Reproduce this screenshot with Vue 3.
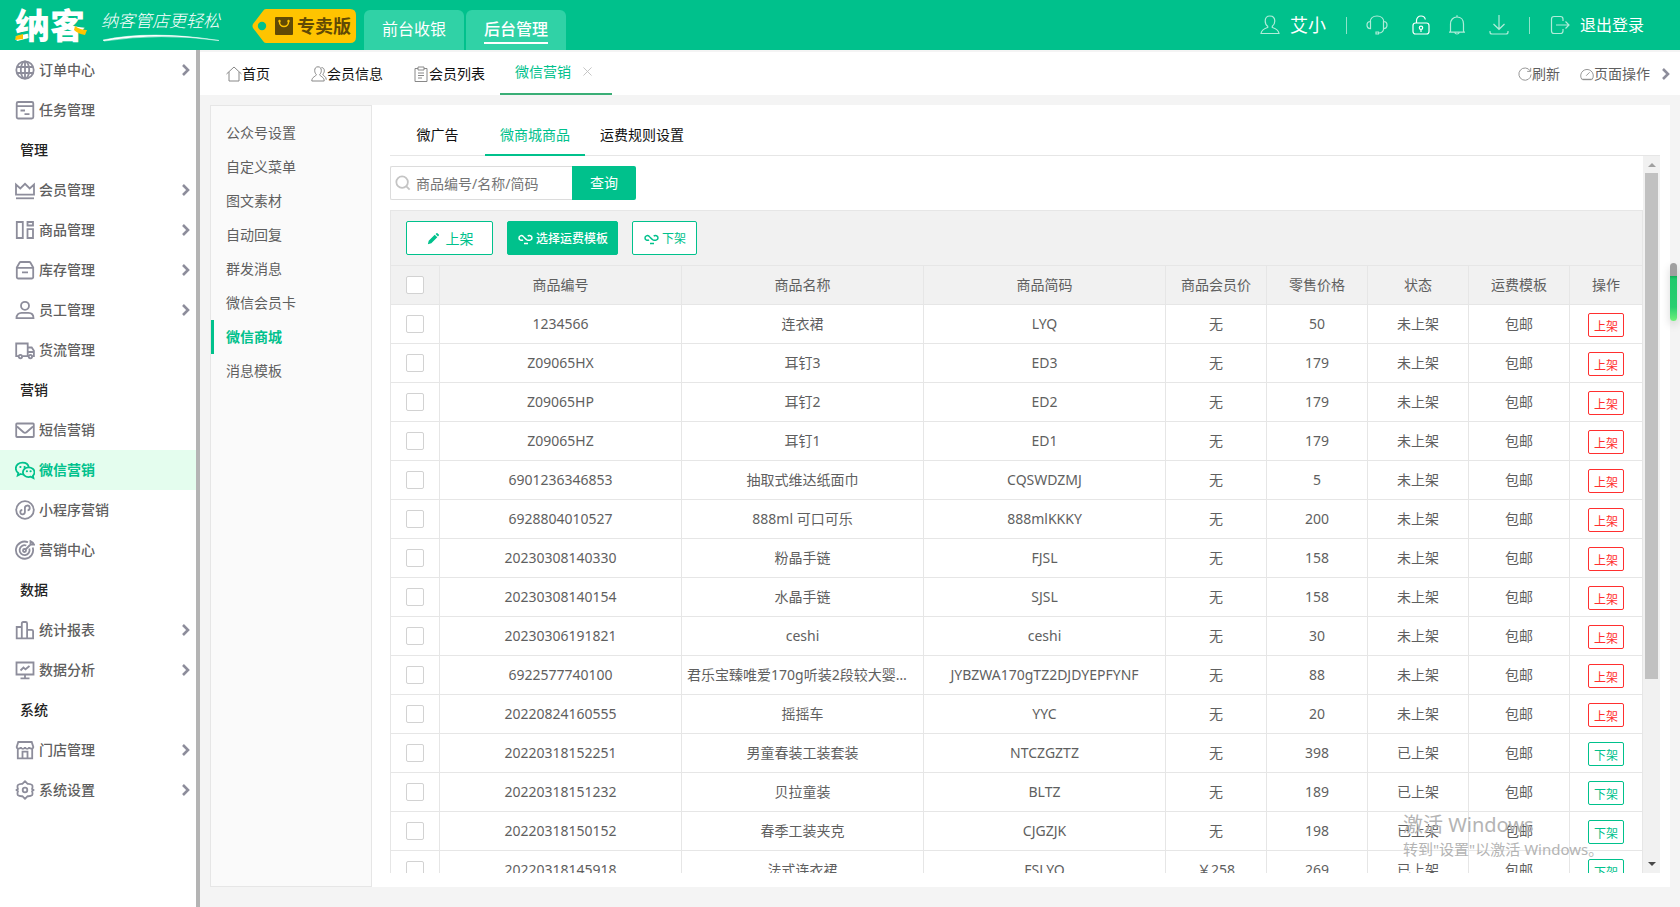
<script setup>
import { ref } from 'vue'

const icons = {
  globe: '<circle cx="10" cy="10" r="8.7"/><ellipse cx="10" cy="10" rx="4.2" ry="8.7"/><path d="M10 1.3v17.4M2 7h16M2 13h16"/>',
  task: '<rect x="1.7" y="2" width="16.6" height="16.5" rx="1.5"/><path d="M2 6.2h16M5.5 10.5h4.5M9.5 14.2h5"/>',
  crown: '<path d="M1 4.5v10.2h18V4.5l-4.3 4L10 3.8 5.3 8.500z"/><path d="M1 18.300h18"/>',
  goods: '<path d="M1.800 2h6v16h-6zM12.500 2h5.500v3.500h-5.500zM12.500 9.200h5.500V18h-5.500z"/>',
  stock: '<path d="M1.800 7.800h16.400v9.200a1.500 1.500 0 0 1-1.500 1.500H3.300a1.500 1.500 0 0 1-1.500-1.500zM1.800 7.500 4.500 2.700a1.500 1.500 0 0 1 1.200-.7h8.600a1.500 1.500 0 0 1 1.200.7l2.700 4.800M7 12.300h6"/>',
  staff: '<circle cx="10" cy="5.800" r="4"/><path d="M1.500 18.200c0-3.700 2.300-5.400 5-5.400h7c2.700 0 5 1.700 5 5.400z"/>',
  truck: '<path d="M3.500 16.200H1.200V3.500h11.500v12.700H7.500M12.700 7.500h4l2.200 3.200v5.500h-1.500M13 12h5.500"/><circle cx="5.400" cy="16.600" r="1.700"/><circle cx="15.400" cy="16.600" r="1.700"/>',
  mail: '<rect x="1.200" y="3.500" width="17.600" height="13.500" rx=".8"/><path d="m2 6.500 6.500 5.700q1.500 1.200 3 0L18 6.500"/>',
  wechat: '<path d="M13.800 7.300C13.300 4.500 10.800 2.600 7.500 2.600 3.800 2.600.8 5 .8 8.400c0 1.900 1 3.500 2.500 4.600l-.6 2.500 2.900-1.500c.8.300 1.500.3 2.300.3"/><path d="M13.600 7.300c-3.200 0-5.700 2.200-5.700 4.900s2.500 4.900 5.700 4.900c.8 0 1.500-.1 2.200-.4l2.600 1.300-.5-2.200c1-1 1.600-2.200 1.600-3.600 0-2.700-2.700-4.900-5.900-4.900z"/><path d="M5.300 7h.2M9.500 7h.2M11.800 11.300h.2M15.500 11.300h.2" stroke-linecap="round" stroke-width="2"/>',
  mini: '<circle cx="10" cy="10" r="8.800"/><path d="M7.300 9.800a2.300 2.300 0 1 0 2.600 2.300V8a2.400 2.400 0 1 1 2.700 2.300"/>',
  target: '<path d="M17.700 7.500A8.600 8.600 0 1 1 13 2.300"/><path d="M14.300 8.500A5 5 0 1 1 11.300 5.500"/><circle cx="9.500" cy="10.500" r="1.500"/><path d="m10 10 6-6M15.500 1.200v3.300h3.500l-1.200-1.800z"/>',
  chart: '<path d="M1.700 18.300V7h5.100v11.300zM6.800 18.300V3.500q0-1.500 1.500-1.500h2.300q1.500 0 1.500 1.500v14.800zM12.100 18.300V9.800h4.500q1.500 0 1.500 1.500v7z"/>',
  monitor: '<path d="M1.500 2.500h17v12h-17zM10 14.500v3.500M5.500 18.300h9"/><path d="m5.500 10.500 3-3 2 1.800 4-3.300"/>',
  shop: '<path d="M2.800 8.500v9.800h14.400V8.500M7.500 18v-6.300h5V18M3.300 2h13.400l1.600 5c0 2-3.700 2.300-4.100.2-.4 2.100-3.800 2.100-4.200 0-.4 2.100-3.800 2.100-4.200 0-.4 2.100-4.100 1.800-4.100-.2z"/>',
  gear: '<path stroke-linejoin="round" d="m10 1.200 2.600 2.600q3.200-.2 4.500 1.200.9 1.500-.1 4l1.600 1-1.600 1.200q1 2.400.1 4-1.300 1.200-4.500 1L10 18.800l-2.600-2.600q-3.200.2-4.500-1-.9-1.600.1-4L1.400 10 3 9q-1-2.500-.1-4 1.300-1.400 4.500-1.200z"/><circle cx="10" cy="10" r="2.300"/>',
}

const menu = [
  { text: '订单中心', icon: 'globe', arrow: true },
  { text: '任务管理', icon: 'task' },
  { text: '管理' },
  { text: '会员管理', icon: 'crown', arrow: true },
  { text: '商品管理', icon: 'goods', arrow: true },
  { text: '库存管理', icon: 'stock', arrow: true },
  { text: '员工管理', icon: 'staff', arrow: true },
  { text: '货流管理', icon: 'truck' },
  { text: '营销' },
  { text: '短信营销', icon: 'mail' },
  { text: '微信营销', icon: 'wechat', active: true },
  { text: '小程序营销', icon: 'mini' },
  { text: '营销中心', icon: 'target' },
  { text: '数据' },
  { text: '统计报表', icon: 'chart', arrow: true },
  { text: '数据分析', icon: 'monitor', arrow: true },
  { text: '系统' },
  { text: '门店管理', icon: 'shop', arrow: true },
  { text: '系统设置', icon: 'gear', arrow: true },
]

const subMenu = ['公众号设置', '自定义菜单', '图文素材', '自动回复', '群发消息', '微信会员卡', '微信商城', '消息模板']
const innerTabs = ['微广告', '微商城商品', '运费规则设置']
const columns = ['商品编号', '商品名称', '商品简码', '商品会员价', '零售价格', '状态', '运费模板', '操作']

const rows = [
  ['1234566', '连衣裙', 'LYQ', '无', '50', false],
  ['Z09065HX', '耳钉3', 'ED3', '无', '179', false],
  ['Z09065HP', '耳钉2', 'ED2', '无', '179', false],
  ['Z09065HZ', '耳钉1', 'ED1', '无', '179', false],
  ['6901236346853', '抽取式维达纸面巾', 'CQSWDZMJ', '无', '5', false],
  ['6928804010527', '888ml 可口可乐', '888mlKKKY', '无', '200', false],
  ['20230308140330', '粉晶手链', 'FJSL', '无', '158', false],
  ['20230308140154', '水晶手链', 'SJSL', '无', '158', false],
  ['20230306191821', 'ceshi', 'ceshi', '无', '30', false],
  ['6922577740100', '君乐宝臻唯爱170g听装2段较大婴儿配方奶粉', 'JYBZWA170gTZ2DJDYEPFYNF', '无', '88', false],
  ['20220824160555', '摇摇车', 'YYC', '无', '20', false],
  ['20220318152251', '男童春装工装套装', 'NTCZGZTZ', '无', '398', true],
  ['20220318151232', '贝拉童装', 'BLTZ', '无', '189', true],
  ['20220318150152', '春季工装夹克', 'CJGZJK', '无', '198', true],
  ['20220318145918', '法式连衣裙', 'FSLYQ', '￥258', '269', true],
]

const keyword = ref('')
</script>

<template>
  <div class="page">
    <header class="top">
      <div class="logo">
        <svg class="logo-accent" viewBox="0 0 74 34" aria-hidden="true">
          <path d="M1 26 8 24v5L0 30zM60 16q5 4 12 4l-2 5q-7-1-11-5z" fill="#ffc400" />
        </svg>
        <span>纳客</span>
      </div>
      <div class="slogan">
        <span>纳客管店更轻松</span>
        <svg viewBox="0 0 126 10" aria-hidden="true">
          <path d="M2 8Q50-2 118 8.500 60 .5 3 9z" fill="#fff" stroke="#fff" stroke-width=".5" />
        </svg>
      </div>
      <div class="edition">
        <svg class="tag-shape" viewBox="0 0 104 34" preserveAspectRatio="none" aria-hidden="true">
          <path d="M14 0h84q6 0 6 6v22q0 6-6 6H14q-2 0-3-2L1 19q-1-2 0-4L11 2q1-2 3-2z" fill="#ffc400" />
          <circle cx="10" cy="17" r="4.200" fill="#00c18c" />
        </svg>
        <svg class="bag" viewBox="0 0 18 18" aria-hidden="true">
          <rect width="18" height="18" rx="1" fill="#614a05" />
          <path d="M4.500 4v1a4.500 4.500 0 0 0 9 0V4" fill="none" stroke="#ffc400" stroke-width="1.500" />
          <circle cx="4.500" cy="4" r="1.200" fill="#ffc400" /><circle cx="13.500" cy="4" r="1.200" fill="#ffc400" />
        </svg>
        <span>专卖版</span>
      </div>
      <nav class="top-tabs">
        <a href="#"><span>前台收银</span></a>
        <a href="#" class="on"><span>后台管理</span></a>
      </nav>
      <div class="top-right">
        <a href="#" class="user">
          <svg class="ti" viewBox="0 0 20 20"><path d="M10 1C7 1 5.200 3 5.200 6c0 2 .9 4.200 2.500 5.300v1.200c-3 1-6.200 2-6.700 6h18c-.5-4-3.700-5-6.700-6v-1.200C13.900 10.200 14.800 8 14.800 6c0-3-1.800-5-4.800-5z" /></svg>
          <span class="uname">艾小</span>
        </a>
        <i class="bar b1"></i>
        <button class="ib headset" aria-label="客服"><svg class="ti" viewBox="0 0 22 20"><path d="M4 7C4.500 3.300 7.300 1 11 1s6.500 2.300 7 6M4.500 6.500v7.200c-2 0-3.500-1.500-3.500-3.600s1.500-3.600 3.500-3.600zM17.500 6.500v7.200c2 0 3.500-1.500 3.500-3.600s-1.500-3.600-3.500-3.600zM17.800 13.500c-.5 3-2.500 4.500-5 4.500M10 17h2.500v2H10z" /></svg></button>
        <button class="ib lock" aria-label="锁屏"><svg class="ti bright" viewBox="0 0 18 20"><rect x="1" y="8" width="16" height="11" rx="2.500" /><path d="M4.500 8V5.500C4.500 3 6.300 1 9 1s4 1.500 4.300 3.500M9 14.500V17" /><circle cx="9" cy="12.800" r="1.700" /></svg></button>
        <button class="ib bell" aria-label="通知"><svg class="ti" viewBox="0 0 18 20"><path d="M9 .3V2M2.500 17V9c0-4 2.500-7 6.500-7s6.500 3 6.500 7v8M1 17.200h16M6.800 17.500c.3 2 4.100 2 4.400 0" /></svg></button>
        <button class="ib down" aria-label="下载"><svg class="ti" viewBox="0 0 20 20"><path d="M10 0v14M4.500 9l5.500 5.300L15.500 9M1 16v1q0 2 2 2h14q2 0 2-2v-1" /></svg></button>
        <i class="bar b2"></i>
        <a href="#" class="logout">
          <svg class="ti" viewBox="0 0 20 20"><path d="M13 6V4q0-2.500-2.500-2.500H4Q1.500 1.500 1.500 4v12q0 2.500 2.500 2.500h6.500Q13 18.500 13 16v-2M6 10h13M15.500 6.500 19 10l-3.500 3.500" /></svg>
          <span>退出登录</span>
        </a>
      </div>
    </header>

    <div class="body">
      <aside class="side">
        <nav class="menu">
          <template v-for="m in menu" :key="m.text">
            <h2 v-if="!m.icon" class="group">{{ m.text }}</h2>
            <a v-else href="#" class="item" :class="{ active: m.active }">
              <svg class="mi" viewBox="0 0 20 20" aria-hidden="true" v-html="icons[m.icon]"></svg>
              <span>{{ m.text }}</span>
              <svg v-if="m.arrow" class="chev" viewBox="0 0 8 12" aria-hidden="true"><path d="m1 1 5 5-5 5" /></svg>
            </a>
          </template>
        </nav>
        <div class="side-bar"></div>
      </aside>

      <main class="main">
        <div class="tabs">
          <a href="#" class="tab t-home"><svg class="si" viewBox="0 0 16 16"><path d="M.5 8 8 1l7.500 7M3 6v9h10V6" /></svg>首页</a>
          <a href="#" class="tab t-info"><svg class="si" viewBox="0 0 16 16"><path d="M7 .8C4.800.8 3.700 2.300 3.700 4.500c0 1.700.6 3 1.600 4C5.300 10.500.8 10.500.8 15h12.400c0-4.500-4.500-4.500-4.500-6.500 1-1 1.600-2.300 1.600-4C10.300 2.300 9.200.8 7 .8zM10.500 1.500c2 .2 2.800 1.500 2.800 3.200 0 1.500-.6 2.700-1.500 3.500 0 1.700 3.500 2 3.500 5.500" /></svg>会员信息</a>
          <a href="#" class="tab t-list"><svg class="si" viewBox="0 0 16 16"><path d="M5 2.500H2v13h12v-13h-3M5 1h6v3H5zM5 7h6M5 9.500h6M5 12h4" /></svg>会员列表</a>
          <div class="tab-on">
            <a href="#">微信营销</a>
            <button aria-label="关闭"><svg viewBox="0 0 10 10"><path d="m.5.5 9 9M9.500.5l-9 9" /></svg></button>
          </div>
          <div class="ops">
            <button><svg class="si" viewBox="0 0 16 16"><path d="M14 4.500A7 7 0 1 0 15 8.500M14.500 1v4h-4" /></svg>刷新</button>
            <button><svg class="si" viewBox="0 0 16 16"><path d="M2 14a7.200 7.200 0 1 1 12 0zM7 10l4-4M3 14.500h10" /></svg>页面操作</button>
            <button class="more" aria-label="更多"><svg class="chev" viewBox="0 0 8 12"><path d="m1 1 5 5-5 5" /></svg></button>
          </div>
        </div>

        <div class="panel">
          <nav class="sub">
            <a v-for="s in subMenu" :key="s" href="#" :class="{ on: s === '微信商城' }">{{ s }}</a>
          </nav>
          <section class="content">
            <nav class="inner-tabs">
              <a v-for="t in innerTabs" :key="t" href="#" :class="{ on: t === '微商城商品' }">{{ t }}</a>
            </nav>
            <div class="scroll">
              <div class="view">
                <form class="search" @submit.prevent>
                  <label class="field">
                    <svg viewBox="0 0 18 18" aria-hidden="true"><circle cx="8" cy="8" r="6.500" /><path d="m12.500 12.500 4 4" /></svg>
                    <input v-model="keyword" type="text" aria-label="商品搜索" placeholder="商品编号/名称/简码" />
                  </label>
                  <button type="submit">查询</button>
                </form>
                <div class="toolbar">
                  <button class="btn wide">
                    <svg class="pen" viewBox="0 0 14 14" aria-hidden="true"><path d="m1 13 1-4 7-7 3 3-7 7zM10 1.200l1-1q.6-.4 1.200 0l1.600 1.600q.4.600 0 1.200l-1 1z" fill="currentColor" /></svg>上架
                  </button>
                  <button class="btn solid">
                    <svg class="link" viewBox="0 0 15 12" aria-hidden="true"><path d="M5 6.800C3.500 7.800 1 7.200 1 5s2.500-3 4-1.800C6.500 4.500 7.500 6 9 6.800c2 1 5 .4 5-1.800s-2.800-3-4.300-1.800M6 10.500h4" /></svg>选择运费模板
                  </button>
                  <button class="btn">
                    <svg class="link" viewBox="0 0 15 12" aria-hidden="true"><path d="M5 6.800C3.500 7.800 1 7.200 1 5s2.500-3 4-1.800C6.500 4.500 7.500 6 9 6.800c2 1 5 .4 5-1.800s-2.800-3-4.300-1.800M6 10.500h4" /></svg>下架
                  </button>
                </div>
                <table>
                  <colgroup>
                    <col class="c-check" /><col /><col /><col />
                    <col class="c-mid" /><col class="c-mid" /><col class="c-mid" /><col class="c-mid" />
                    <col class="c-op" />
                  </colgroup>
                  <thead>
                    <tr>
                      <th class="ck"><input type="checkbox" aria-label="全选" /></th>
                      <th v-for="c in columns" :key="c">{{ c }}</th>
                    </tr>
                  </thead>
                  <tbody>
                    <tr v-for="r in rows" :key="r[0]">
                      <td class="ck"><input type="checkbox" :aria-label="'选择 ' + r[1]" /></td>
                      <td v-for="i in 5" :key="i">{{ r[i - 1] }}</td>
                      <td>{{ r[5] ? '已上架' : '未上架' }}</td>
                      <td>包邮</td>
                      <td><button class="act" :class="{ off: r[5] }">{{ r[5] ? '下架' : '上架' }}</button></td>
                    </tr>
                  </tbody>
                </table>
              </div>
              <div class="vbar" aria-hidden="true">
                <svg viewBox="0 0 8 4"><path d="M0 4 4 0l4 4z" fill="#a0a0a0" /></svg>
                <div class="thumb"></div>
                <svg viewBox="0 0 8 4"><path d="m0 0 4 4 4-4z" fill="#484848" /></svg>
              </div>
            </div>
          </section>
        </div>
      </main>
    </div>

    <div class="float-pill" aria-hidden="true"></div>
    <div class="watermark">
      <p class="w1">激活 Windows</p>
      <p class="w2">转到"设置"以激活 Windows。</p>
    </div>
  </div>
</template>

<style>
body {
  margin: 0;
  background: #f4f4f4;
}
</style>

<style scoped>
* {
  box-sizing: border-box;
}
.page {
  position: relative;
  display: flex;
  flex-direction: column;
  height: 100vh;
  overflow: hidden;
  background: #f4f4f4;
  color: #5f5f5f;
  font: 14px/20px "Noto Sans", "Noto Sans CJK SC", sans-serif;
}
a {
  color: inherit;
  text-decoration: none;
}
button {
  padding: 0;
  border: 0;
  background: none;
  color: inherit;
  font: inherit;
  cursor: pointer;
}
svg {
  display: block;
  flex: none;
}

/* header */
.top {
  display: flex;
  flex: none;
  height: 50px;
  padding-left: 15px;
  background: #00c18c;
  color: #fff;
}
.logo {
  position: relative;
  width: 72px;
  padding-top: 7px;
  font-size: 35px;
  line-height: 34px;
  font-weight: 900;
  font-family: "Noto Sans CJK SC", sans-serif;
}
.logo-accent {
  position: absolute;
  left: 0;
  top: 10px;
  width: 74px;
  height: 34px;
  z-index: 1;
}
.slogan {
  width: 126px;
  margin: 8px 25px 0 14px;
  font: italic 300 17px/24px "Noto Sans CJK SC", sans-serif;
  white-space: nowrap;
}
.slogan svg {
  width: 126px;
  height: 10px;
}
.edition {
  position: relative;
  display: flex;
  align-items: center;
  gap: 4px;
  width: 104px;
  height: 34px;
  margin: 9px 8px 0 0;
  padding-left: 23px;
  color: #614a05;
  font: 700 18px/32px "Noto Sans CJK SC", sans-serif;
}
.tag-shape {
  position: absolute;
  inset: 0;
  width: 100%;
  height: 100%;
}
.bag {
  position: relative;
  width: 18px;
  height: 18px;
}
.edition span {
  position: relative;
  height: 34px;
}
.top-tabs {
  display: flex;
  gap: 2px;
  padding-top: 10px;
}
.top-tabs a {
  width: 100px;
  height: 40px;
  padding-top: 4px;
  border-radius: 6px 6px 0 0;
  background: #30d2a6;
  font-size: 16px;
  text-align: center;
}
.top-tabs span {
  display: inline-block;
  height: 30px;
  line-height: 30px;
}
.top-tabs .on span {
  border-bottom: 2px solid #fff;
  font-weight: 500;
}
.top-right {
  display: flex;
  align-items: center;
  margin-left: auto;
  padding-right: 36px;
}
.ti {
  width: 20px;
  height: 20px;
  fill: none;
  stroke: #b0ecd9;
  stroke-width: 1.2;
}
.ti.bright {
  stroke: #fff;
}
.user,
.logout {
  display: flex;
  align-items: center;
  gap: 10px;
  font-size: 16px;
}
.uname {
  font-size: 18px;
}
.bar {
  width: 1px;
  height: 17px;
  background: #8ee3c9;
}
.b1 {
  margin: 0 19px 0 20px;
}
.b2 {
  margin: 0 20px;
}
.headset .ti {
  width: 22px;
}
.lock {
  margin: 0 18px 0 24px;
}
.bell {
  margin-right: 23px;
}
.lock .ti,
.bell .ti {
  width: 18px;
}

/* sidebar */
.body {
  display: flex;
  flex: 1;
  min-height: 0;
}
.side {
  display: flex;
  flex: none;
  width: 200px;
  background: #fff;
}
.menu {
  flex: 1;
}
.side-bar {
  width: 4px;
  background: #b4b4b4;
}
.item {
  display: flex;
  align-items: center;
  height: 40px;
  padding: 0 6px 0 15px;
  gap: 4px;
  font-weight: 500;
}
.item.active {
  background: #e4fdee;
  color: #00c18c;
  font-weight: 700;
}
.mi {
  width: 20px;
  height: 20px;
  fill: none;
  stroke: #8d8d9b;
  stroke-width: 1.8;
}
.active .mi {
  stroke: #00c18c;
}
.chev {
  width: 8px;
  height: 12px;
  margin-left: auto;
  fill: none;
  stroke: #8d8d9b;
  stroke-width: 2.6;
}
.group {
  margin: 0;
  height: 40px;
  padding-left: 20px;
  color: #222;
  font-size: 14px;
  font-weight: 500;
  line-height: 40px;
}

/* page tabs */
.main {
  display: flex;
  flex: 1;
  flex-direction: column;
  min-width: 0;
  padding-top: 2px;
}
.tabs {
  display: flex;
  flex: none;
  height: 43px;
  padding: 0 10px 0 26px;
  background: #fff;
}
.tab {
  display: flex;
  align-items: center;
  color: #111;
}
.t-info {
  margin-left: 41px;
}
.t-list {
  margin: 0 15px 0 30px;
}
.si {
  width: 16px;
  height: 16px;
  fill: none;
  stroke: #888;
  stroke-width: 1;
}
.tab-on {
  display: flex;
  align-items: center;
  gap: 12px;
  width: 112px;
  padding: 0 0 2px 15px;
  border-bottom: 2px solid #3aae76;
  color: #00c18c;
}
.tab-on svg {
  width: 9px;
  height: 9px;
  fill: none;
  stroke: #c0c0c0;
}
.ops {
  display: flex;
  align-items: center;
  margin-left: auto;
  color: #5f5f5f;
}
.ops button {
  display: flex;
  align-items: center;
  margin-right: 20px;
}
.ops .si {
  width: 14px;
  height: 14px;
}
.ops button:nth-child(2) {
  margin-right: 12px;
}
.ops .more {
  margin-right: 0;
}

/* content panel */
.panel {
  display: flex;
  flex: 1;
  min-height: 0;
  margin: 10px 10px 20px;
  background: #fff;
}
.sub {
  flex: none;
  width: 162px;
  padding-top: 10px;
  border: 1px solid #e6e6e6;
  background: #fafafa;
}
.sub a {
  display: block;
  height: 34px;
  padding-left: 12px;
  border-left: 3px solid transparent;
  line-height: 34px;
}
.sub .on {
  border-color: #00c18c;
  color: #00c18c;
  font-weight: 700;
}
.content {
  display: flex;
  flex: 1;
  flex-direction: column;
  min-width: 0;
  padding: 10px 10px 14px 18px;
}
.inner-tabs {
  display: flex;
  flex: none;
  height: 41px;
  border-bottom: 1px solid #e6e6e6;
  color: #111;
  line-height: 40px;
  text-align: center;
}
.inner-tabs a {
  min-width: 95px;
  height: 41px;
  padding: 0 15px;
}
.inner-tabs .on {
  border-bottom: 2px solid #00c18c;
  color: #00c18c;
}
.scroll {
  display: flex;
  flex: 1;
  min-height: 0;
}
.view {
  flex: 1;
  min-width: 0;
  overflow: hidden;
}
.search {
  display: flex;
  height: 34px;
  margin: 10px 0;
}
.field {
  display: flex;
  align-items: center;
  gap: 5px;
  width: 182px;
  padding-left: 4px;
  border: 1px solid #dcdcdc;
  border-right: 0;
  border-radius: 2px 0 0 2px;
}
.field svg {
  width: 16px;
  height: 16px;
  fill: none;
  stroke: #c4c4c4;
  stroke-width: 2;
}
.field input {
  flex: 1;
  min-width: 0;
  height: 30px;
  padding: 0;
  border: 0;
  outline: 0;
  background: none;
  color: #5f5f5f;
  font: inherit;
}
.field input::placeholder {
  color: #757575;
}
.search button {
  width: 64px;
  border-radius: 0 2px 2px 0;
  background: #00c18c;
  color: #fff;
}
.toolbar {
  display: flex;
  gap: 14px;
  padding: 10px 15px;
  border: 1px solid #e6e6e6;
  background: #f1f1f1;
}
.btn {
  display: flex;
  align-items: center;
  justify-content: center;
  gap: 3px;
  height: 34px;
  padding: 1px 10px 0 11px;
  border: 1px solid #00c18c;
  border-radius: 2px;
  background: #fff;
  color: #00c18c;
  font-size: 12px;
}
.btn.wide {
  width: 87px;
  gap: 7px;
  font-size: 14px;
}
.btn.solid {
  padding: 1px 9px 0 10px;
  background: #00c18c;
  color: #fff;
  font-weight: 500;
}
.pen {
  width: 12px;
  height: 12px;
}
.link {
  width: 15px;
  height: 12px;
  fill: none;
  stroke: currentColor;
  stroke-width: 1.500;
}
table {
  width: 100%;
  table-layout: fixed;
  border-spacing: 0;
  border-left: 1px solid #e6e6e6;
}
.c-check {
  width: 49px;
}
.c-mid {
  width: 101px;
}
.c-op {
  width: 73px;
}
th,
td {
  height: 39px;
  padding: 0 5px;
  border: solid #e6e6e6;
  border-width: 0 1px 1px 0;
  overflow: hidden;
  font-weight: 400;
  line-height: 20px;
  text-align: center;
  text-overflow: ellipsis;
  white-space: nowrap;
}
th {
  background: #f1f1f1;
}
.ck {
  padding: 0 15px;
}
.ck input {
  display: block;
  width: 18px;
  height: 18px;
  margin: 0;
  border: 1px solid #d2d2d2;
  border-radius: 2px;
  background: #fff;
  appearance: none;
}
.ck input:checked {
  background: #00c18c;
}
.act {
  display: block;
  width: 36px;
  height: 24px;
  margin: 1px auto 0;
  padding-top: 3px;
  border: 1px solid #ff2f2f;
  border-radius: 2px;
  background: #fff;
  color: #ff2f2f;
  font-size: 12px;
  line-height: 19px;
}
.act.off {
  border-color: #00c18c;
  color: #00c18c;
}
.vbar {
  display: flex;
  flex: none;
  flex-direction: column;
  align-items: center;
  width: 17px;
  padding: 7px 0;
  background: #f1f1f1;
}
.vbar svg {
  width: 8px;
  height: 4px;
}
.thumb {
  width: 13px;
  height: 72%;
  margin: 6px 0 auto;
  background: #c1c1c1;
}

/* overlays */
.float-pill {
  position: absolute;
  top: 263px;
  right: 3px;
  width: 7px;
  height: 58px;
  border-radius: 4px;
  background: linear-gradient(#9f9f9f 13px, #0fae56 13px, #1fc96b 16px, #27cf70 44px, #6ff07a);
  box-shadow: 0 4px 8px rgba(0, 0, 0, 0.16);
}
.watermark {
  position: absolute;
  right: 77px;
  bottom: 47px;
  width: 200px;
  color: #b4b4b4;
  white-space: nowrap;
  pointer-events: none;
}
.watermark p {
  margin: 0;
}
.w1 {
  font-size: 20px;
  line-height: 26px;
}
.w2 {
  font-size: 15px;
  line-height: 22px;
}
</style>
